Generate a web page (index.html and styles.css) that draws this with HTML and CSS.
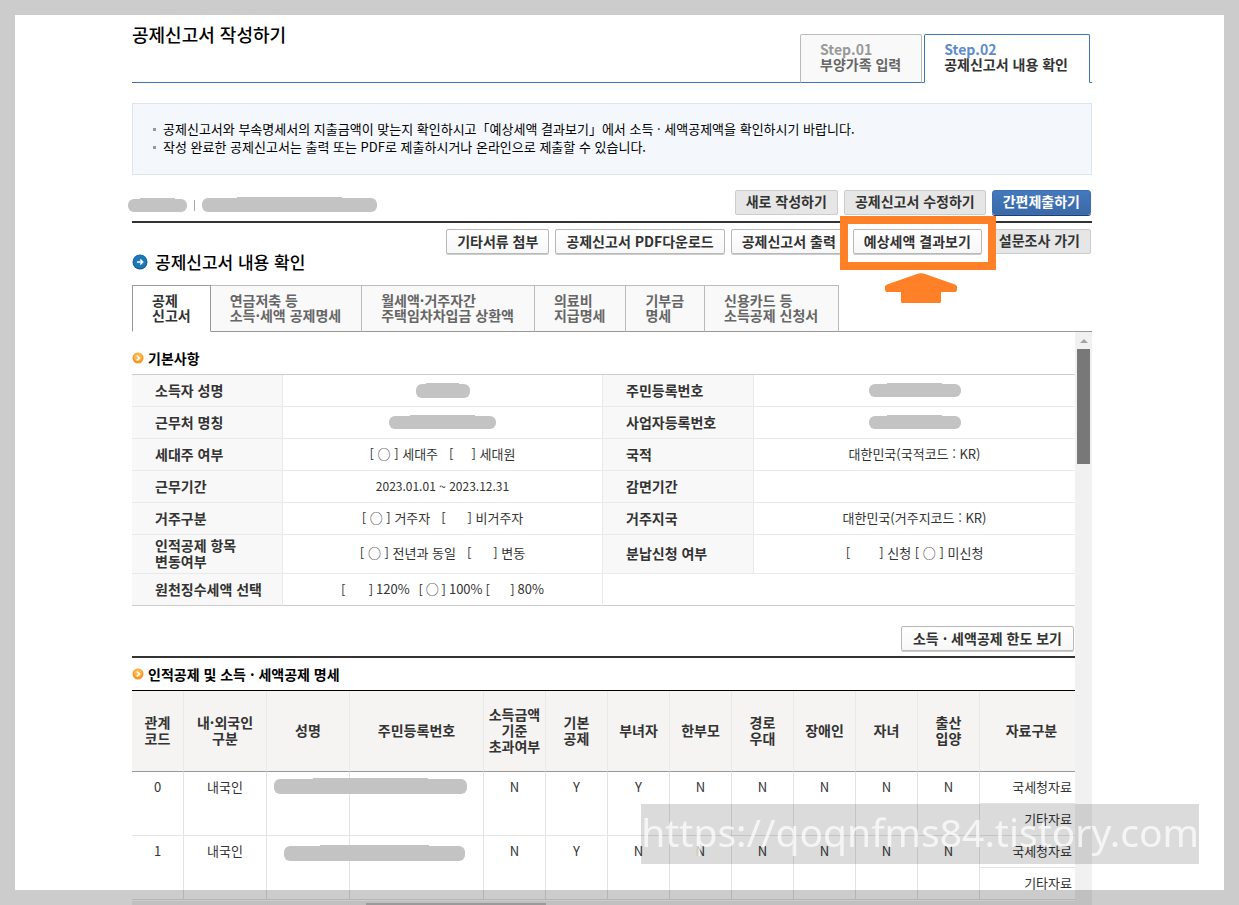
FILE: index.html
```html
<!DOCTYPE html>
<html lang="ko">
<head>
<meta charset="utf-8">
<title>공제신고서 작성하기</title>
<link rel="stylesheet" href="styles.css">
</head>
<body>
<div class="page">
  <header class="header">
    <h1 class="title">공제신고서 작성하기</h1>
    <nav class="steps">
      <a class="step" href="#step1"><span class="step-no">Step.01</span>부양가족 입력</a>
      <a class="step step-on" href="#step2"><span class="step-no">Step.02</span>공제신고서 내용 확인</a>
    </nav>
  </header>

  <ul class="notice">
    <li>공제신고서와 부속명세서의 지출금액이 맞는지 확인하시고「예상세액 결과보기」에서 소득 · 세액공제액을 확인하시기 바랍니다.</li>
    <li>작성 완료한 공제신고서는 출력 또는 PDF로 제출하시거나 온라인으로 제출할 수 있습니다.</li>
  </ul>

  <div class="user-row">
    <div class="user"><span class="mask mask-name"></span><span class="bar"></span><span class="mask mask-company"></span></div>
    <div class="actions">
      <button class="btn btn-gray" type="button">새로 작성하기</button>
      <button class="btn btn-gray" type="button">공제신고서 수정하기</button>
      <button class="btn btn-blue" type="button">간편제출하기</button>
    </div>
  </div>

  <div class="head-row">
    <h2 class="subtitle">
      <svg width="16" height="16" viewBox="0 0 16 16" aria-hidden="true"><circle cx="8" cy="8" r="7.5" fill="#14598f"/><circle cx="8" cy="7.7" r="6.6" fill="#1c79b8"/><path d="M5 8h5.500M8.300 5.600 10.700 8l-2.400 2.400" fill="none" stroke="#fff" stroke-width="1.400"/></svg>
      공제신고서 내용 확인
    </h2>
    <div class="actions">
      <button class="btn" type="button">기타서류 첨부</button>
      <button class="btn" type="button">공제신고서 PDF다운로드</button>
      <button class="btn" type="button">공제신고서 출력</button>
      <span class="focus">
        <button class="btn" type="button">예상세액 결과보기</button>
        <span class="focus-box"></span>
        <svg class="focus-arrow" width="72" height="30" viewBox="0 0 72 30" aria-hidden="true"><path d="M0 13 2 11.500 32 1Q36-.5 40 1L70 11.500 72 13V17L71 19H56V29L55 30H17L16 29V19H1L0 17Z" fill="#ff8027"/></svg>
      </span>
      <button class="btn btn-gray" type="button">설문조사 가기</button>
    </div>
  </div>

  <div class="tabs" role="tablist">
    <button class="tab tab-on" type="button" role="tab" aria-selected="true">공제<br>신고서</button>
    <button class="tab" type="button" role="tab">연금저축 등<br>소득·세액 공제명세</button>
    <button class="tab" type="button" role="tab">월세액·거주자간<br>주택임차차입금 상환액</button>
    <button class="tab" type="button" role="tab">의료비<br>지급명세</button>
    <button class="tab" type="button" role="tab">기부금<br>명세</button>
    <button class="tab" type="button" role="tab">신용카드 등<br>소득공제 신청서</button>
  </div>

  <div class="panel">
    <div class="content">
      <h3 class="section section-first">
        <svg width="12" height="12" viewBox="0 0 12 12" aria-hidden="true"><circle cx="6" cy="6" r="5.500" fill="#f39a26"/><circle cx="6" cy="5" r="4" fill="#ffb54a"/><path d="M4.800 3.500 7.300 6 4.800 8.500" fill="none" stroke="#fff" stroke-width="1.700"/></svg>
        기본사항
      </h3>
      <table class="info">
        <colgroup><col class="c-label"><col class="c-value"><col class="c-label"><col></colgroup>
        <tbody>
          <tr><th scope="row">소득자 성명</th><td><span class="mask mask-a"></span></td><th scope="row">주민등록번호</th><td><span class="mask mask-b"></span></td></tr>
          <tr><th scope="row">근무처 명칭</th><td><span class="mask mask-c"></span></td><th scope="row">사업자등록번호</th><td><span class="mask mask-b"></span></td></tr>
          <tr><th scope="row">세대주 여부</th><td>[ ○ ] 세대주 &nbsp; [ &nbsp; &nbsp; ] 세대원</td><th scope="row">국적</th><td>대한민국(국적코드 : KR)</td></tr>
          <tr><th scope="row">근무기간</th><td class="period">2023.01.01 ~ 2023.12.31</td><th scope="row">감면기간</th><td></td></tr>
          <tr><th scope="row">거주구분</th><td>[ ○ ] 거주자 &nbsp; [ &nbsp; &nbsp; &nbsp;] 비거주자</td><th scope="row">거주지국</th><td>대한민국(거주지코드 : KR)</td></tr>
          <tr class="tall"><th scope="row">인적공제 항목<br>변동여부</th><td>[ ○ ] 전년과 동일 &nbsp; [ &nbsp; &nbsp; &nbsp;] 변동</td><th scope="row">분납신청 여부</th><td>[ &nbsp; &nbsp; &nbsp; &nbsp;] 신청 [ ○ ] 미신청</td></tr>
          <tr><th scope="row">원천징수세액 선택</th><td>[ &nbsp; &nbsp; &nbsp; &nbsp;] 120% &nbsp; [ ○ ] 100% [ &nbsp; &nbsp; &nbsp; ] 80%</td><td colspan="2"></td></tr>
        </tbody>
      </table>

      <div class="limit"><button class="btn" type="button">소득 · 세액공제 한도 보기</button></div>

      <h3 class="section">
        <svg width="12" height="12" viewBox="0 0 12 12" aria-hidden="true"><circle cx="6" cy="6" r="5.500" fill="#f39a26"/><circle cx="6" cy="5" r="4" fill="#ffb54a"/><path d="M4.800 3.500 7.300 6 4.800 8.500" fill="none" stroke="#fff" stroke-width="1.700"/></svg>
        인적공제 및 소득 · 세액공제 명세
      </h3>
      <table class="people">
        <colgroup><col class="p-code"><col class="p-mid"><col class="p-mid"><col class="p-id"><col class="p-yn"><col class="p-yn"><col class="p-yn"><col class="p-yn"><col class="p-yn"><col class="p-yn"><col class="p-yn"><col class="p-yn"><col></colgroup>
        <thead>
          <tr><th scope="col">관계<br>코드</th><th scope="col">내·외국인<br>구분</th><th scope="col">성명</th><th scope="col">주민등록번호</th><th scope="col">소득금액<br>기준<br>초과여부</th><th scope="col">기본<br>공제</th><th scope="col">부녀자</th><th scope="col">한부모</th><th scope="col">경로<br>우대</th><th scope="col">장애인</th><th scope="col">자녀</th><th scope="col">출산<br>입양</th><th scope="col" class="src-head">자료구분</th></tr>
        </thead>
        <tbody>
          <tr><td rowspan="2">0</td><td rowspan="2">내국인</td><td rowspan="2" class="masked"><span class="mask mask-p0"></span></td><td rowspan="2"></td><td rowspan="2">N</td><td rowspan="2">Y</td><td rowspan="2">Y</td><td rowspan="2">N</td><td rowspan="2">N</td><td rowspan="2">N</td><td rowspan="2">N</td><td rowspan="2">N</td><td class="src">국세청자료</td></tr>
          <tr><td class="src">기타자료</td></tr>
          <tr><td rowspan="2">1</td><td rowspan="2">내국인</td><td rowspan="2" class="masked"><span class="mask mask-p1"></span></td><td rowspan="2"></td><td rowspan="2">N</td><td rowspan="2">Y</td><td rowspan="2">N</td><td rowspan="2">N</td><td rowspan="2">N</td><td rowspan="2">N</td><td rowspan="2">N</td><td rowspan="2">N</td><td class="src">국세청자료</td></tr>
          <tr><td class="src">기타자료</td></tr>
        </tbody>
      </table>
      <div class="hscroll"><span class="hthumb"></span></div>
    </div>
    <div class="vscroll"><span class="varrow"></span><span class="vthumb"></span></div>
  </div>
</div>
<div class="watermark">https://qoqnfms84.tistory.com</div>
<div class="frame"></div>
</body>
</html>
```

FILE: styles.css
```css
* { box-sizing: border-box; }
body {
  margin: 0;
  background: #fff;
  color: #333;
  font: 13px/18px "Noto Sans CJK KR", "Noto Sans", sans-serif;
}
h1, h2, h3, ul { margin: 0; padding: 0; }
button { font-family: inherit; cursor: pointer; }
.page { height: 100vh; overflow: hidden; padding: 15px 147px 0 132px; }

.header {
  display: flex;
  justify-content: space-between;
  height: 68px;
  border-bottom: 1px solid #3f74b0;
}
.title { font-size: 18px; line-height: 38px; font-weight: 500; color: #000; }
.steps { display: flex; gap: 2px; align-items: flex-end; margin-bottom: -1px; padding-right: 2px; }
.step {
  height: 49px;
  padding: 7px 20px 0 19px;
  border: 1px solid #bbb;
  border-bottom-color: #3f74b0;
  border-radius: 2px 2px 0 0;
  background: #f9f9f9;
  color: #666;
  font-size: 14px;
  line-height: 15px;
  font-weight: 700;
  text-decoration: none;
}
.step-no { display: block; color: #999; }
.step-on { padding-right: 21px; border-color: #3f74b0; border-bottom-color: #fff; background: #fff; color: #333; }
.step-on .step-no { color: #5e8bcb; }

.notice {
  margin-top: 20px;
  padding: 16px 20px 18px;
  border: 1px solid #dfe5ee;
  background: #f4f8fd;
  color: #000;
  list-style: none;
}
.notice li { display: flex; align-items: center; gap: 7px; }
.notice li::before { content: ""; width: 3px; height: 3px; background: #999; }

.user-row {
  display: flex;
  justify-content: space-between;
  height: 48px;
  padding: 15px 1px 0 0;
  border-bottom: 2px solid #333;
}
.user { display: flex; align-items: center; gap: 7px; height: 30px; margin-left: -4px; }
.bar { width: 1px; height: 11px; background: #aaa; }
.actions { display: flex; gap: 6px; }

.btn {
  height: 25px;
  padding: 0 10px 2px;
  border: 1px solid #b8b8b8;
  border-radius: 2px;
  background: linear-gradient(#fff, #f7f7f7);
  box-shadow: 0 1px 0 #ccc;
  color: #333;
  font-size: 14px;
  line-height: 20px;
  font-weight: 700;
  white-space: nowrap;
}
.btn-gray { padding-bottom: 4px; border-color: #ccc; background: #e6e6e6; box-shadow: none; }
.btn-blue { padding-bottom: 4px; border-color: #3b6fb2; background: linear-gradient(#4479bc, #3a69a8); box-shadow: 0 1px 0 #1f3f6b; color: #fff; border-radius: 3px; }

.head-row {
  display: flex;
  justify-content: space-between;
  height: 50px;
  padding: 6px 1px 0 0;
}
.subtitle {
  display: flex;
  align-items: center;
  align-self: flex-end;
  gap: 7px;
  color: #000;
  font-size: 17px;
  line-height: 22px;
  font-weight: 500;
}
.focus { position: relative; }
.focus-box { position: absolute; inset: -13px -14px -16px -13px; border: 8px solid #ff8027; pointer-events: none; height: 54px; }
.focus-arrow { position: absolute; left: 32px; top: 44px; }

.tabs { display: flex; margin-top: 12px; border-bottom: 1px solid #999; }
.tab {
  height: 47px;
  margin-bottom: -1px;
  padding: 0 20px 2px 19px;
  border: 1px solid #bbb;
  border-left: 0;
  border-bottom-color: #999;
  background: #f9f9f9;
  color: #666;
  font-size: 14px;
  line-height: 15px;
  font-weight: 700;
  text-align: left;
}
.tab-on { padding-right: 19px; border: 1px solid #999; border-bottom-color: #fff; background: #fff; color: #333; }

.panel { display: flex; }
.content { flex: 1; min-width: 0; }
.section { display: flex; align-items: center; gap: 4px; height: 32px; font-size: 14px; font-weight: 700; color: #000; }
.section-first { margin-top: 10px; }

table { width: 100%; table-layout: fixed; border-collapse: separate; border-spacing: 0; }
th { font-size: 14px; line-height: 16px; font-weight: 700; }

.info { border-top: 1px solid #ccc; }
.info th, .info td {
  height: 32px;
  padding: 0 0 2px;
  border-right: 1px solid #e9e9e9;
  border-bottom: 1px solid #e9e9e9;
  text-align: center;
}
.info th { padding-left: 23px; background: #f8f8f8; text-align: left; }
.info td:last-child { border-right: 0; }
.info .tall th, .info .tall td { height: 39px; }
.info tr:last-child > * { border-bottom-color: #ccc; }
.info .period { font-size: 12px; }
.c-label { width: 151px; }
.c-value { width: 320px; }

.limit { display: flex; justify-content: flex-end; padding: 20px 1px 5px 0; border-bottom: 2px solid #333; }
.limit .btn { padding-left: 11px; padding-right: 11px; }

.people { border-top: 1px solid #000; }
.people th, .people td { padding: 0; border-right: 1px solid #e3e3e3; text-align: center; }
.people th { height: 81px; padding-bottom: 2px; border-bottom: 1px solid #999; border-right-color: #e9e9e9; background: #f5f4f2; }
.people td { height: 32px; border-bottom: 1px solid #e3e3e3; line-height: 29px; vertical-align: top; }
.people .src, .people .src-head { border-right: 0; }
.people .src { padding-right: 3px; text-align: right; }
.people .src-head { padding-left: 8px; }
.p-code { width: 52px; }
.p-mid { width: 83px; }
.p-id { width: 134px; }
.p-yn { width: 62px; }

.mask { display: inline-block; position: relative; height: 14px; border-radius: 6px; background: #c3c3c3; vertical-align: middle; }
.mask::before { content: ""; position: absolute; left: 20%; right: 20%; top: -1px; height: 1px; background: #c3c3c3; }
.mask-name { width: 59px; height: 13px; }
.mask-company { width: 175px; }
.mask-a { width: 54px; }
.mask-b { width: 92px; height: 13px; }
.mask-c { width: 107px; height: 13px; }
.masked { position: relative; }
.people .mask { position: absolute; height: 15px; }
.mask-p0 { left: 7px; top: 7px; width: 193px; }
.mask-p1 { left: 17px; top: 10px; width: 181px; }

.hscroll { height: 17px; margin-top: 1px; padding: 2px 0 2px 234px; background: #f1f1f1; }
.hthumb { display: block; width: 180px; height: 13px; background: #c1c1c1; }
.vscroll { display: flex; flex-direction: column; align-items: center; width: 17px; background: #f1f1f1; }
.varrow { margin: 7px 0 6px; border: 4px solid transparent; border-top: 0; border-bottom-color: #a3a3a3; }
.vthumb { width: 13px; height: 115px; background: #787878; }

.watermark {
  position: fixed;
  right: 40px;
  bottom: 41px;
  height: 60px;
  background: rgba(0, 0, 0, .14);
  color: rgba(255, 255, 255, .7);
  font: 400 39px/56px "Noto Sans", sans-serif;
  white-space: nowrap;
  pointer-events: none;
}
.frame { position: fixed; inset: 0; border: 15px solid rgba(0, 0, 0, .2); pointer-events: none; }
```
